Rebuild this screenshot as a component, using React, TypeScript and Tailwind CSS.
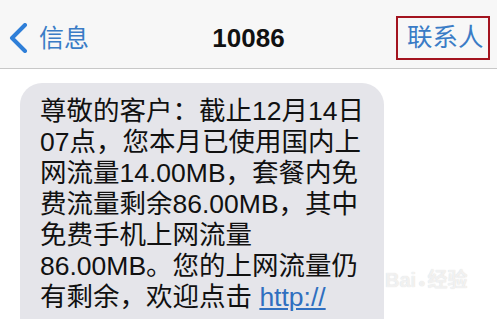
import React from "react";

const lines = [
  "尊敬的客户：截止12月14日",
  "07点，您本月已使用国内上",
  "网流量14.00MB，套餐内免",
  "费流量剩余86.00MB，其中",
  "免费手机上网流量",
  "86.00MB。您的上网流量仍",
];

export default function App() {
  return (
    <div className="relative w-[497px] h-[319px] overflow-hidden bg-white font-['Liberation_Sans','Noto_Sans_CJK_SC',sans-serif]">
      <div className="h-[69px] bg-[#f7f7f7] border-b border-[#c8c8c8] flex items-center pt-[8px]">
        <div className="flex-1 flex items-center pl-[7px]">
          <svg width="22" height="30" viewBox="0 0 22 30" className="mr-[10px]">
            <path d="M18 2 L5 15 L18 28" fill="none" stroke="#2f7fd8" strokeWidth="4" strokeLinecap="round" strokeLinejoin="round" />
          </svg>
          <span className="text-[25px] leading-none text-[#3a7cc6]">信息</span>
        </div>
        <div className="text-[26px] font-bold leading-none text-[#111]">10086</div>
        <div className="flex-1 flex justify-end pr-[7px]">
          <span className="border-[2.5px] border-[#a3141f] h-[44px] w-[94px] flex items-center pl-[9px] text-[25.5px] leading-none text-[#3a7cc6]">
            联系人
          </span>
        </div>
      </div>
      <div className="mt-[14px] ml-[20px] w-[364px] h-[300px] rounded-[22px] bg-[#e5e5ea] pt-[13px] pl-[20px] text-[26.5px] leading-[31px] text-[#111]">
        {lines.map((l) => (
          <div key={l} className="whitespace-nowrap">{l}</div>
        ))}
        <div className="whitespace-nowrap">
          有剩余，欢迎点击 <span className="text-[#2f6fc0] underline">http://</span>
        </div>
      </div>
      <div className="absolute left-[385px] top-[270px] text-[20px] font-bold text-white/70 [text-shadow:0_0_1px_#d0d0d0] leading-none">
        Bai<span className="text-[12px] px-[2px]">●</span>经验
      </div>
    </div>
  );
}
